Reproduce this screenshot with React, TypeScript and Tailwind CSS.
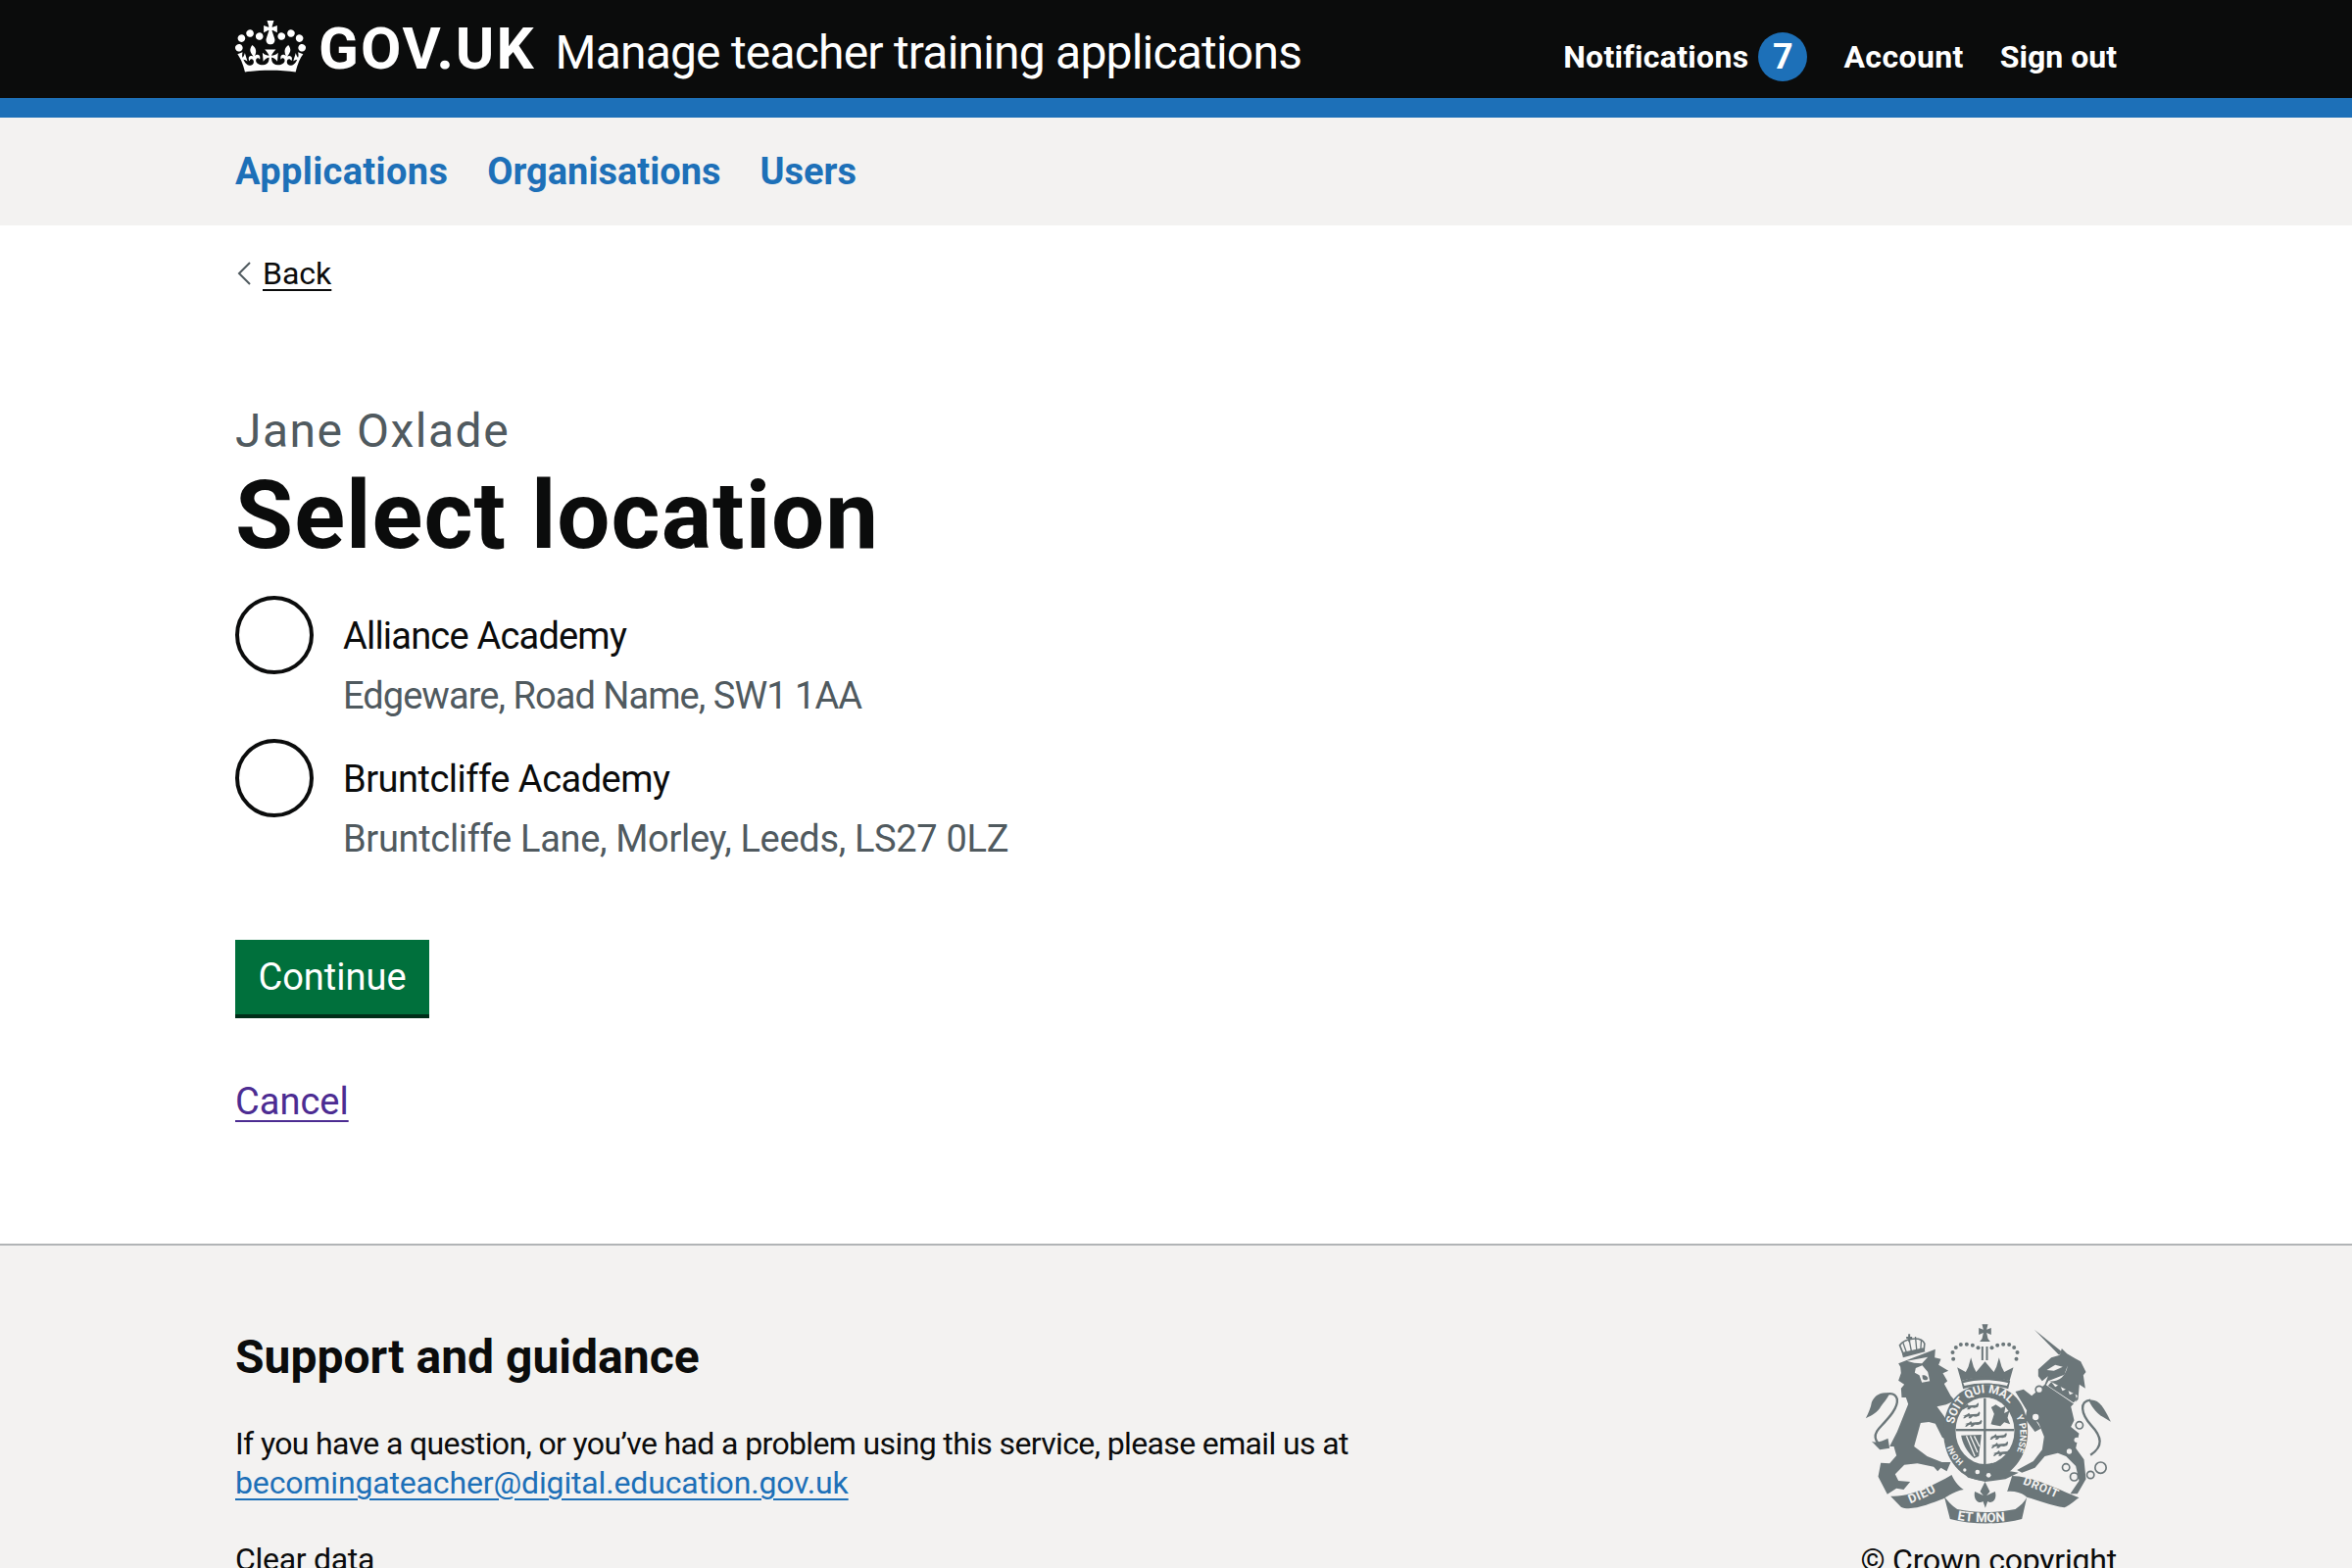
import React from "react";

const INK = "#6b7679";
const BG = "#f3f2f1";

function Crest() {
  const dots: [number, number][] = [
    [400, 172], [398, 152], [408, 137], [423, 128], [441, 127], [459, 130], [476, 138],
    [593, 172], [596, 152], [586, 137], [571, 128], [553, 127], [535, 130], [518, 138],
  ];
  const lion = "l14 -5l6 -5l3 5l10 -1l12 -1l7 -7l2 5l-3 8l-10 3l-9 -1l-7 6h-7l3 -6l-7 1l-7 5h-5l5 -8z";
  return (
    <svg viewBox="130 65 755 615" width="252" height="205" className="shrink-0">
      <path d="M196 442C165 438 150 410 172 385C195 360 232 325 228 295C222 272 195 275 178 290" fill="none" stroke={INK} strokeWidth="7" />
      <path d="M205 278C178 270 158 285 150 305C148 320 140 338 132 354C150 345 170 335 178 318C186 305 198 295 205 278Z" fill={INK} />
      <path d="M150 424C165 430 180 425 200 415L205 445L175 450Z" fill={INK} />
      <path fill={INK} d="M232 186L345 142L343 168L362 172L355 190L385 208L368 216L382 240L372 248L392 285L405 300L378 312L350 318L372 348L395 385L405 412L388 424L366 412L345 370L325 365L300 368L280 440L320 470L365 488L392 488L380 516L362 505L352 516L340 502L290 492L250 496L222 525L232 545L268 548L248 572L226 568L198 586L170 532L178 490L205 492L226 468L218 440L205 440L228 395L262 310L255 290L242 290L240 262L250 250L232 238L240 215L238 196Z" />
      <path fill={BG} d="M258 178L322 166L304 186L280 184ZM285 200L305 192L322 212L328 240L304 244L296 222L282 214Z" />
      <path fill={INK} d="M305 222C312 220 322 225 322 232C320 238 310 238 306 232Z" />
      <path fill="none" stroke={INK} strokeWidth="5" d="M248 160L236 130C250 110 300 100 312 125L310 146" />
      <path fill="none" stroke={INK} strokeWidth="4" d="M264 108L272 150M284 104L288 146M246 122L258 156M302 114L300 144" />
      <path fill={INK} d="M246 168L243 152L308 138L314 150Z" />
      <path fill={INK} d="M262 96H268V104H274V110H268V120H262V110H256V104H262Z" />
      <path fill={INK} d="M488 66H506L502 82L516 77V98L502 92L506 110L513 119H481L488 110L492 92L478 98V77L492 82Z" />
      <rect x="486" y="134" width="6" height="42" fill={INK} /><rect x="500" y="134" width="6" height="42" fill={INK} />
      {dots.map(([x, y]) => <circle key={`${x}-${y}`} cx={x} cy={y} r="6" fill={INK} />)}
      <path fill={INK} d="M412 198L438 212L446 196L454 168L462 196L470 212L497 180L524 212L532 196L540 168L548 196L556 212L584 198L572 240C530 226 462 226 424 240Z" />
      <path fill={INK} d="M424 240C470 222 526 222 574 240L568 264C520 250 474 250 430 264Z" />
      <path fill={BG} d="M430 246C470 234 526 234 568 246L564 254C520 244 474 244 434 254Z" />
      <path fill={INK} d="M497 252C585 252 628 315 628 395C628 480 565 545 497 545C425 545 370 480 370 395C370 315 415 252 497 252Z" />
      <path id="soit" d="M402 372C412 312 455 276 500 276C540 276 575 300 594 342" fill="none" />
      <path id="pense" d="M592 348C616 395 606 450 568 504" fill="none" />
      <path id="honi" d="M432 486C412 470 398 446 392 418" fill="none" />
      <text fill={BG} fontFamily="Roboto, sans-serif" fontWeight="700" fontSize="36"><textPath href="#soit">SOIT QUI MAL</textPath></text>
      <text fill={BG} fontFamily="Roboto, sans-serif" fontWeight="700" fontSize="28"><textPath href="#pense">Y PENSE</textPath></text>
      <text fill={BG} fontFamily="Roboto, sans-serif" fontWeight="700" fontSize="26"><textPath href="#honi">HONI</textPath></text>
      <ellipse cx="497" cy="392" rx="90" ry="102" fill={BG} />
      <rect x="493" y="292" width="7" height="205" fill={INK} />
      <rect x="408" y="386" width="178" height="7" fill={INK} />
      {[[424, 320], [428, 347], [434, 372], [510, 412], [514, 438], [520, 462]].map(([x, y]) => (
        <path key={`${x}${y}`} fill={INK} d={`M${x} ${y}${lion}`} />
      ))}
      <path fill={INK} d="M515 372L525 340L516 320L530 312L546 322L560 316L556 338L572 330L566 352L574 372L556 366L544 378Z" />
      <path fill={INK} d="M424 406L486 404L478 470L464 476C440 455 428 430 424 406Z" />
      <path fill="none" stroke={BG} strokeWidth="4" d="M440 408L466 470M452 408L474 458M464 408L480 440" />
      <path fill={INK} d="M430 490L460 505L540 510L600 520L560 540L497 548L445 535L420 510Z" />
      <circle cx="474" cy="518" r="7" fill={BG} /><circle cx="508" cy="528" r="7" fill={BG} /><circle cx="435" cy="512" r="5" fill={BG} />
      <path fill={INK} d="M648 82L732 150L724 160Z" />
      <path fill={INK} d="M660 204L700 168L726 160L732 140L748 156L772 170L790 180L806 212L798 222L804 262L786 250L782 296L760 318L770 360L760 380L785 400L775 445L800 480L806 540L780 585L758 585L785 545L775 500L745 470L720 460L680 470L650 505L610 520L595 512L645 485L672 450L678 410L662 370L640 340L668 385L650 395L620 355L625 330L590 272L615 265L640 285L680 250L690 225L672 240L660 225Z" />
      <path fill={BG} d="M686 206L712 190L735 196L708 208ZM690 240L740 220L750 192C745 228 720 244 690 240Z" />
      <path fill={BG} d="M684 252L692 238L780 284L772 312Z" />
      <path fill={INK} d="M690 254L700 242L712 258L726 250L734 270L750 262L756 282L772 276L778 296L768 306Z" />
      {[[663, 266, 11], [652, 350, 12], [786, 375, 11], [745, 504, 11], [770, 533, 12], [820, 527, 11], [851, 505, 17]].map(([x, y, r]) => (
        <circle key={`${x}`} cx={x} cy={y} r={r} fill={BG} stroke={INK} strokeWidth="5" />
      ))}
      <circle cx="778" cy="420" r="8" fill={BG} /><circle cx="755" cy="455" r="8" fill={BG} />
      <path d="M820 466C860 440 855 410 822 375C790 340 785 300 820 298" fill="none" stroke={INK} strokeWidth="7" />
      <path d="M815 298C845 292 860 318 882 364L850 345C838 335 822 318 815 298Z" fill={INK} />
      <path fill={INK} d="M497 548L512 578L502 590L528 578C535 600 520 618 505 608L498 628L491 608C476 618 460 600 466 578L492 590L482 578Z" />
      <path fill={INK} d="M208 592C260 596 330 565 395 527C405 550 420 565 432 572C410 575 385 590 370 600C330 615 270 640 240 625Z" />
      <path fill={INK} d="M580 530C640 530 730 575 785 597C765 610 755 622 740 627C700 620 660 605 625 595C615 585 590 575 565 578Z" />
      <path fill={INK} d="M372 592C380 605 395 620 412 632C470 644 530 644 590 632C605 622 618 610 625 596L610 662C545 680 460 680 390 662Z" />
      <path fill="none" d="M268 615C305 600 340 585 372 562" id="dieu" />
      <path fill="none" d="M612 555C650 570 700 590 745 612" id="droit" />
      <path fill="none" d="M412 664C460 674 540 674 585 664" id="etmon" />
      <text fill={BG} fontFamily="Roboto, sans-serif" fontWeight="700" fontSize="38" letterSpacing="2"><textPath href="#dieu">DIEU</textPath></text>
      <text fill={BG} fontFamily="Roboto, sans-serif" fontWeight="700" fontSize="36" letterSpacing="2"><textPath href="#droit">DROIT</textPath></text>
      <text fill={BG} fontFamily="Roboto, sans-serif" fontWeight="700" fontSize="40"><textPath href="#etmon">ET MON</textPath></text>
    </svg>
  );
}

function CrownLogo() {
  return (
    <svg viewBox="0 0 132 97" width="72" height="53" className="shrink-0 text-white">
      <path fill="currentColor" fillRule="evenodd" d="M25 30.2c3.5 1.5 7.7-.2 9.1-3.7 1.5-3.6-.2-7.8-3.9-9.2-3.6-1.4-7.6.3-9.1 3.9-1.4 3.5.3 7.5 3.9 9zM9 39.5c3.6 1.5 7.8-.2 9.2-3.7 1.5-3.6-.2-7.8-3.9-9.1-3.6-1.5-7.6.2-9.1 3.8-1.4 3.5.3 7.5 3.8 9zM4.4 57.2c3.5 1.5 7.7-.2 9.1-3.8 1.5-3.6-.2-7.7-3.9-9.1-3.5-1.5-7.6.3-9.1 3.8-1.4 3.5.3 7.6 3.9 9.1zm38.3-21.4c3.5 1.5 7.7-.2 9.1-3.8 1.5-3.6-.2-7.7-3.9-9.1-3.6-1.5-7.6.3-9.1 3.8-1.3 3.6.4 7.7 3.9 9.1zm64.4-5.6c-3.6 1.5-7.8-.2-9.1-3.7-1.5-3.6.2-7.8 3.8-9.2 3.6-1.4 7.7.3 9.2 3.9 1.3 3.5-.4 7.5-3.9 9zm15.9 9.3c-3.6 1.5-7.7-.2-9.1-3.7-1.5-3.6.2-7.8 3.7-9.1 3.6-1.5 7.7.2 9.2 3.8 1.5 3.5-.3 7.5-3.8 9zm4.7 17.7c-3.6 1.5-7.8-.2-9.2-3.8-1.5-3.6.2-7.7 3.9-9.1 3.6-1.5 7.7.3 9.2 3.8 1.3 3.5-.4 7.6-3.9 9.1zM89.3 35.8c-3.6 1.5-7.8-.2-9.2-3.8-1.4-3.6.2-7.7 3.9-9.1 3.6-1.5 7.7.3 9.2 3.8 1.4 3.6-.3 7.7-3.9 9.1zM69.7 17.7l8.9 4.7V9.3l-8.9 2.8c-.2-.3-.5-.6-.9-.9L72.4 0H59.6l3.5 11.2c-.3.3-.6.5-.9.9l-8.8-2.8v13.1l8.8-4.7c.3.3.6.7.9.9l-5 15.4v.1c-.2.8-.4 1.6-.4 2.4 0 4.1 3.1 7.5 7 8.1h.2c.3 0 .7.1 1 .1.4 0 .7 0 1-.1h.2c4-.6 7.1-4.1 7.1-8.1 0-.8-.1-1.7-.4-2.4V34l-5.1-15.4c.4-.2.7-.6 1-.9zM66 92.8c16.9 0 32.8 1.1 47.1 3.2 4-16.9 8.9-26.7 14-33.5l-9.6-3.4c1 4.9 1.1 7.2 0 10.2-1.5-1.4-3-4.3-4.2-8.7L108.6 76c2.8-2 5-3.2 7.5-3.3-4.4 9.4-10 11.9-13.6 11.2-4.3-.8-6.3-4.6-5.6-7.9 1-4.7 5.7-5.9 8-.5 4.3-8.7-3-11.4-7.6-8.8 7.1-7.2 7.9-13.5 2.1-21.1-8 6.1-8.1 12.3-4.5 20.8-4.7-5.4-12.1-2.5-9.5 6.2 3.4-5.2 7.9-2 7.2 3.1-.6 4.3-6.4 7.8-13.5 7.2-10.3-.9-10.9-8-11.2-13.8 2.5-.5 7.1 1.8 11 7.3L80.2 60c-4.1 4.4-8 5.3-12.3 5.4 1.4-4.4 8-11.6 8-11.6H55.5s6.4 7.2 7.9 11.6c-4.2-.1-8-1-12.3-5.4l1.4 16.4c3.9-5.5 8.5-7.7 10.9-7.3-.3 5.8-.9 12.8-11.1 13.8-7.2.6-12.9-2.9-13.5-7.2-.7-5 3.8-8.3 7.1-3.1 2.7-8.7-4.6-11.6-9.4-6.2 3.7-8.5 3.6-14.7-4.6-20.8-5.8 7.6-5 13.9 2.2 21.1-4.7-2.6-11.9.1-7.7 8.8 2.3-5.5 7.1-4.2 8.1.5.7 3.3-1.3 7.1-5.7 7.9-3.5.7-9-1.8-13.5-11.2 2.5.1 4.7 1.3 7.5 3.3l-4.7-15.4c-1.2 4.4-2.7 7.2-4.3 8.7-1.1-3-.9-5.3 0-10.2l-9.5 3.4c5 6.9 9.9 16.7 14 33.5 14.8-2.1 30.8-3.2 47.7-3.2z" />
    </svg>
  );
}

function Radio({ name, hint, ts, th }: { name: string; hint: string; ts: string; th: string }) {
  return (
    <div className="flex">
      <span className="h-[80px] w-[80px] shrink-0 rounded-full border-4 border-[#0b0c0c] bg-white" />
      <div className="pl-[30px]">
        <div className={`pt-[16px] h-[80px] text-[38px] leading-[50px] text-[#0b0c0c] ${ts}`}>{name}</div>
        <div className={`text-[38px] leading-[50px] text-[#505a5f] -mt-[3px] ${th}`}>{hint}</div>
      </div>
    </div>
  );
}

export default function App() {
  return (
    <div className="flex h-[1600px] flex-col overflow-hidden bg-white font-['Roboto',sans-serif] text-[#0b0c0c]">
      <header className="h-[120px] shrink-0 border-b-[20px] border-[#1d70b8] bg-[#0b0c0c] text-white">
        <div className="mx-auto flex h-[100px] w-[1920px] items-start justify-between">
          <div className="flex items-start">
            <div className="pt-[21px]"><CrownLogo /></div>
            <span className="ml-[13px] mt-[14px] text-[60px] font-bold leading-[72px] tracking-[2px]">GOV.UK</span>
            <span className="ml-[20px] mt-[24px] text-[48px] leading-[60px] tracking-[-0.8px]">Manage teacher training applications</span>
          </div>
          <nav className="mt-[33px] flex items-center text-[32px] font-bold leading-[50px]">
            <span className="tracking-[0.3px]">Notifications</span>
            <span className="ml-[10px] flex h-[50px] w-[50px] items-center justify-center rounded-full bg-[#1d70b8] text-[36px]">7</span>
            <span className="ml-[37px] tracking-[0.4px]">Account</span>
            <span className="ml-[37px]">Sign out</span>
          </nav>
        </div>
      </header>
      <div className="h-[110px] shrink-0 bg-[#f3f2f1]">
        <div className="mx-auto flex h-full w-[1920px] items-center gap-[40px] text-[38px] font-bold text-[#1d70b8]">
          <span className="tracking-[0.35px]">Applications</span>
          <span className="tracking-[0px]">Organisations</span>
          <span className="tracking-[0px]">Users</span>
        </div>
      </div>
      <main className="mx-auto h-[1039px] w-[1920px] shrink-0">
        <div className="mt-[29px] flex h-[40px] items-center">
          <svg width="14" height="24" viewBox="0 0 14 24" className="ml-[2px]"><path d="M13 1L2 12l11 11" fill="none" stroke="#505a5f" strokeWidth="2" /></svg>
          <span className="ml-[12px] text-[32px] leading-[40px] underline underline-offset-[5px] decoration-2">Back</span>
        </div>
        <div className="mt-[116px] text-[48px] leading-[50px] text-[#505a5f] tracking-[1.5px]">Jane Oxlade</div>
        <h1 className="mt-[11px] text-[96px] font-bold leading-[100px] tracking-[1.05px]">Select location</h1>
        <div className="mt-[32px] flex flex-col gap-[19px]">
          <Radio name="Alliance Academy" hint="Edgeware, Road Name, SW1 1AA" ts="tracking-[-0.8px]" th="tracking-[-0.95px]" />
          <Radio name="Bruntcliffe Academy" hint="Bruntcliffe Lane, Morley, Leeds, LS27 0LZ" ts="tracking-[-0.5px]" th="tracking-[-0.32px]" />
        </div>
        <button className="mt-[78px] flex h-[80px] w-[198px] items-center justify-center border-b-4 border-[#002d18] bg-[#00703c] text-[38px] text-white">Continue</button>
        <div className="mt-[60px] text-[38px] leading-[50px] text-[#4c2c92] underline underline-offset-[6px] decoration-2">Cancel</div>
      </main>
      <footer className="flex-1 border-t-2 border-[#b1b4b6] bg-[#f3f2f1]">
        <div className="mx-auto flex w-[1920px] justify-between">
          <div>
            <h2 className="mt-[84px] text-[48px] font-bold leading-[60px]">Support and guidance</h2>
            <p className="mt-[38px] text-[32px] leading-[40px] tracking-[-0.63px]">If you have a question, or you’ve had a problem using this service, please email us at</p>
            <a className="block text-[32px] leading-[40px] text-[#1d70b8] underline underline-offset-[5px] decoration-2 tracking-[-0.15px]">becomingateacher@digital.education.gov.uk</a>
            <p className="mt-[38px] text-[32px] leading-[40px] tracking-[-0.3px]">Clear data</p>
          </div>
          <div className="flex flex-col items-end">
            <div className="mr-[5px] mt-[80px]"><Crest /></div>
            <p className="mt-[16px] text-[32px] leading-[40px] tracking-[-0.2px]">© Crown copyright</p>
          </div>
        </div>
      </footer>
    </div>
  );
}
